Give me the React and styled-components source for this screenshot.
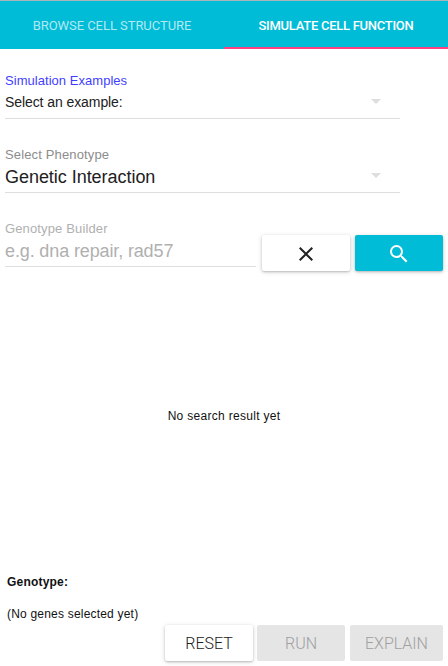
import React from "react";
import styled, { createGlobalStyle } from "styled-components";

const GlobalStyle = createGlobalStyle`
  * { box-sizing: border-box; }
  body { margin: 0; background: #fff; font-family: "Liberation Sans", sans-serif; }
`;

const Panel = styled.main`
  display: flex;
  flex-direction: column;
  width: 448px;
  height: 666px;
  overflow: hidden;
  border-top: 1px solid #a9b4b8;
`;

const Tabs = styled.nav`
  display: flex;
  height: 48px;
  flex: none;
  background: #00bcd7;
`;

const Tab = styled.button`
  flex: 1;
  padding: 2px 0 0;
  border: 0;
  border-bottom: 2px solid ${(p) => (p.$active ? "#ff4081" : "transparent")};
  background: none;
  color: ${(p) => (p.$active ? "#fff" : "rgba(255, 255, 255, 0.7)")};
  font: ${(p) => (p.$active ? 500 : 400)} 13px Roboto, sans-serif;
  letter-spacing: ${(p) => p.$spacing};
  white-space: nowrap;
`;

const Form = styled.section`
  display: flex;
  flex-direction: column;
  flex: none;
  padding: 20px 5px 0;
`;

const Field = styled.div`
  display: flex;
  flex-direction: column;
  justify-content: flex-end;
  flex: none;
  width: ${(p) => p.$width};
  height: ${(p) => p.$height};
  border-bottom: 1px solid #dedede;
`;

const Label = styled.label`
  height: 22px;
  padding-top: 1px;
  line-height: 22px;
  color: ${(p) => p.$color};
  font-size: 13px;
  letter-spacing: ${(p) => p.$spacing};
`;

const Value = styled.div`
  display: flex;
  align-items: center;
  justify-content: space-between;
  height: 23px;
  margin-bottom: 4px;
  padding-right: 19px;
  color: ${(p) => p.$color || "#212121"};
  font-size: ${(p) => p.$size};
  letter-spacing: ${(p) => p.$spacing};
`;

const ValueText = styled.span`
  padding-top: ${(p) => (p.$large ? "2px" : "0")};
  padding-bottom: ${(p) => (p.$large ? "0" : "2px")};
`;

const Caret = styled.svg`
  width: 10px;
  height: 5px;
  margin-top: -2px;
  fill: #dedede;
`;

const SearchRow = styled.div`
  display: flex;
  align-items: flex-start;
`;

const Button = styled.button`
  display: flex;
  align-items: center;
  justify-content: center;
  flex: none;
  width: ${(p) => p.$width || "88px"};
  height: 36px;
  padding: 0;
  border: 0;
  border-radius: 2px;
  background: ${(p) => (p.$primary ? "#00bcd7" : p.disabled ? "#e5e5e5" : "#fff")};
  color: ${(p) => (p.disabled ? "#a0a0a0" : "#212121")};
  box-shadow: ${(p) => (p.disabled ? "none" : "0 1px 5px rgba(0,0,0,.16), 0 1px 2px rgba(0,0,0,.18)")};
  font: 300 16px Roboto, sans-serif;
`;

const SearchActions = styled.div`
  display: flex;
  gap: 5px;
  margin: 42px 0 0 6px;
`;

const Icon = styled.svg`
  width: 24px;
  height: 24px;
  margin-top: 1px;
  fill: ${(p) => p.$color};
`;

const Results = styled.section`
  display: flex;
  flex: 1;
  align-items: center;
  justify-content: center;
  padding-bottom: 1px;
  color: #111;
  font-size: 12px;
  letter-spacing: 0.3px;
`;

const Footer = styled.footer`
  flex: none;
  height: 105px;
  padding: 13px 5px 0 7px;
  font-size: 12px;
  color: #111;
`;

const Heading = styled.h2`
  height: 16px;
  margin: 0 0 16px;
  font-size: 12px;
  line-height: 16px;
  font-weight: 700;
  letter-spacing: 0.2px;
`;

const Message = styled.p`
  height: 16px;
  margin: 0;
  line-height: 16px;
  letter-spacing: 0.2px;
`;

const Actions = styled.div`
  display: flex;
  justify-content: flex-end;
  gap: 5px;
  margin-top: 3px;

  ${Button}:first-child {
    margin-right: -1px;
  }
`;

const DownCaret = () => (
  <Caret viewBox="0 0 10 5"><path d="M0 0h10L5 5z" /></Caret>
);

export default function App() {
  return (
    <>
      <GlobalStyle />
      <Panel>
        <Tabs>
          <Tab $spacing="-0.05px">BROWSE CELL STRUCTURE</Tab>
          <Tab $active $spacing="-0.27px">SIMULATE CELL FUNCTION</Tab>
        </Tabs>
        <Form>
          <Field $width="395px" $height="50px">
            <Label $color="#3f3fff" $spacing="0.04px">Simulation Examples</Label>
            <Value $size="14px" $spacing="-0.08px"><ValueText>Select an example:</ValueText><DownCaret /></Value>
          </Field>
          <Field $width="395px" $height="74px">
            <Label $color="#8c8c8c" $spacing="0.14px">Select Phenotype</Label>
            <Value $size="18px" $spacing="-0.04px"><ValueText $large>Genetic Interaction</ValueText><DownCaret /></Value>
          </Field>
          <SearchRow>
            <Field $width="251px" $height="74px">
              <Label $color="#b0b0b0" $spacing="0.14px">Genotype Builder</Label>
              <Value $size="18px" $color="#b0b0b0" $spacing="-0.13px"><ValueText $large>e.g. dna repair, rad57</ValueText></Value>
            </Field>
            <SearchActions>
              <Button aria-label="Clear"><Icon $color="#212121" viewBox="0 0 24 24"><path d="M19 6.41L17.59 5 12 10.59 6.41 5 5 6.41 10.59 12 5 17.59 6.41 19 12 13.41 17.59 19 19 17.59 13.41 12z" /></Icon></Button>
              <Button $primary aria-label="Search"><Icon $color="#fff" viewBox="0 0 24 24"><path d="M15.5 14h-.79l-.28-.27A6.47 6.47 0 0 0 16 9.5 6.5 6.5 0 1 0 9.5 16c1.61 0 3.09-.59 4.23-1.57l.27.28v.79l5 4.99L20.49 19l-4.99-5zm-6 0C7.01 14 5 11.99 5 9.5S7.01 5 9.5 5 14 7.01 14 9.5 11.99 14 9.5 14z" /></Icon></Button>
            </SearchActions>
          </SearchRow>
        </Form>
        <Results>No search result yet</Results>
        <Footer>
          <Heading>Genotype:</Heading>
          <Message>(No genes selected yet)</Message>
          <Actions>
            <Button>RESET</Button>
            <Button disabled>RUN</Button>
            <Button disabled $width="93px">EXPLAIN</Button>
          </Actions>
        </Footer>
      </Panel>
    </>
  );
}
